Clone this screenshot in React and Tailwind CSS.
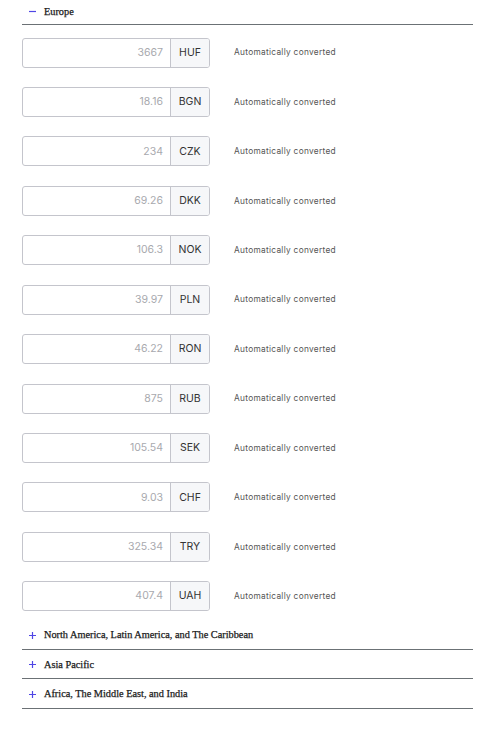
import React from "react";

const rows = [
  ["3667", "HUF"],
  ["18.16", "BGN"],
  ["234", "CZK"],
  ["69.26", "DKK"],
  ["106.3", "NOK"],
  ["39.97", "PLN"],
  ["46.22", "RON"],
  ["875", "RUB"],
  ["105.54", "SEK"],
  ["9.03", "CHF"],
  ["325.34", "TRY"],
  ["407.4", "UAH"],
];

const serif = { fontFamily: '"Liberation Serif", "DejaVu Serif", serif', WebkitTextStroke: "0.25px #1a1a1a" };
const sans = { fontFamily: 'Inter, "Open Sans", "Liberation Sans", sans-serif' };

function Minus() {
  return (
    <svg width="7" height="7" viewBox="0 0 7 7" className="shrink-0">
      <path d="M0 3.5 H7" stroke="#4f46e5" strokeWidth="1.2" />
    </svg>
  );
}
function Plus() {
  return (
    <svg width="7" height="7" viewBox="0 0 7 7" className="shrink-0">
      <path d="M0 3.5 H7 M3.5 0 V7" stroke="#4f46e5" strokeWidth="1.2" />
    </svg>
  );
}

function Item({ title }) {
  return (
    <div className="h-[29.5px] flex items-center gap-[8px] pl-[7px] pt-[1px] border-b border-[#6b7175]">
      <Plus />
      <span className="text-[10.3px] text-[#1a1a1a]" style={serif}>{title}</span>
    </div>
  );
}

export default function App() {
  return (
    <div className="w-[479px] h-[729px] bg-white overflow-hidden">
      <div className="ml-[22px] w-[451px]">
        <div className="h-[25px] flex items-center gap-[8px] pl-[7px] pb-[1px] border-b border-[#6b7175]">
          <Minus />
          <span className="text-[10.3px] text-[#1a1a1a]" style={serif}>Europe</span>
        </div>
        <div className="pt-[12.5px] pb-[9px] flex flex-col gap-[19.45px]">
          {rows.map(([v, c]) => (
            <div key={c} className="flex items-center h-[30px]" style={sans}>
              <div className="flex w-[188px] h-[30px] border border-[#c4c5cc] rounded-[3px] overflow-hidden">
                <div className="flex-1 flex items-center justify-end pr-[7px] text-[10.5px] text-[#a8a9ae]">
                  {v}
                </div>
                <div className="w-[39px] flex items-center justify-center border-l border-[#c4c5cc] bg-[#f6f7f9] text-[10.5px] text-[#333]">
                  {c}
                </div>
              </div>
              <span className="ml-[24px] text-[8.3px] tracking-[0.3px] text-[#555]">Automatically converted</span>
            </div>
          ))}
        </div>
        <Item title="North America, Latin America, and The Caribbean" />
        <Item title="Asia Pacific" />
        <Item title="Africa, The Middle East, and India" />
      </div>
    </div>
  );
}
